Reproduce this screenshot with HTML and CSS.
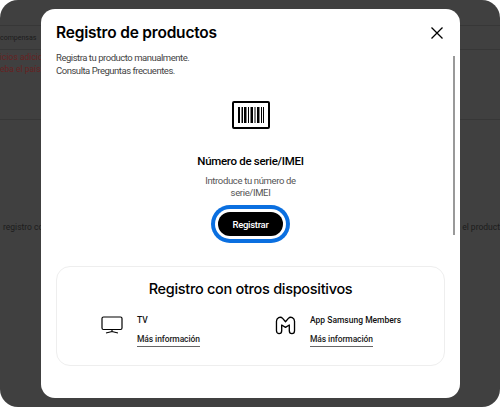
FILE: index.html
```html
<!DOCTYPE html>
<html lang="es">
<head>
    <meta charset="UTF-8">
    <meta name="viewport" content="width=device-width, initial-scale=1.0">
    <title>Registro de productos</title>
    <link rel="stylesheet" href="styles.css">
</head>
<body>

    <div class="screen">
        <!-- Page behind the dialog -->
        <div class="backdrop">
            <div class="back-row back-tabs"><span>compensas</span></div>
            <div class="back-row back-notes">
                <span>icios adicio</span>
                <span>eba el país</span>
            </div>
            <div class="back-row back-body">
                <span>registro co</span>
                <span>el product</span>
            </div>
        </div>

        <!-- Dialog -->
        <div class="modal">
            <div class="modal-head">
                <h2>Registro de productos</h2>
                <svg class="close-icon" viewBox="0 0 12 12" width="12" height="12">
                    <path d="M0.5 0.5L11.5 11.5M11.5 0.5L0.5 11.5" fill="none" stroke="#000" stroke-width="1.3"/>
                </svg>
            </div>
            <p class="intro">Registra tu producto manualmente.<br>Consulta Preguntas frecuentes.</p>

            <div class="serial">
                <svg class="barcode" viewBox="0 0 38 28" width="38" height="28">
                    <rect x="1" y="1" width="36" height="26" rx="1" fill="none" stroke="#000" stroke-width="2"/>
                    <path d="M6 6h2v16h-2zM9.500 6h1.500v16h-1.500zM12 6h2.500v16h-2.500zM16 6h1v16h-1zM18.500 6h2.500v16h-2.500zM22.500 6h1v16h-1zM25 6h2.500v16h-2.500zM29 6h1v16h-1zM31 6h1v16h-1z"/>
                </svg>
                <h3>Número de serie/IMEI</h3>
                <p>Introduce tu número de<br>serie/IMEI</p>
                <button class="register">Registrar</button>
            </div>

            <div class="other-card">
                <h2>Registro con otros dispositivos</h2>
                <div class="device-list">
                    <div class="device">
                        <svg viewBox="0 0 22 18" width="22" height="18">
                            <rect x="1" y="1" width="20" height="12.500" rx="1.500" fill="none" stroke="#000" stroke-width="1.200"/>
                            <path d="M11 13.500V15.500M5 17L11 15.500L17 17" fill="none" stroke="#000" stroke-width="1.200"/>
                        </svg>
                        <div class="device-text">
                            <span class="device-name">TV</span>
                            <a class="more-link">Más información</a>
                        </div>
                    </div>
                    <div class="device">
                        <svg viewBox="0 0 22 20" width="21" height="19">
                            <path d="M1.500 5.500C1.500 2 5.500 0 8 2.500L11 6L14 2.500C16.500 0 20.500 2 20.500 5.500V15.500C20.500 19.500 15 19.500 15 15.500V9.500L11 12L7 9.500V15.500C7 19.500 1.500 19.500 1.500 15.500Z" fill="none" stroke="#000" stroke-width="1.400" stroke-linejoin="round"/>
                        </svg>
                        <div class="device-text">
                            <span class="device-name">App Samsung Members</span>
                            <a class="more-link">Más información</a>
                        </div>
                    </div>
                </div>
            </div>

            <div class="scrollbar"></div>
        </div>
    </div>

</body>
</html>
```

FILE: styles.css
```css
* {
    box-sizing: border-box;
    margin: 0;
    padding: 0;
    font-family: "Roboto", "Liberation Sans", sans-serif;
}

body {
    width: 500px;
    height: 407px;
    overflow: hidden;
    background: #fff;
}

.screen {
    position: relative;
    width: 500px;
    height: 407px;
    background: #404040;
    border-radius: 18px;
    overflow: hidden;
}

/* Dimmed page */
.backdrop {
    display: flex;
    flex-direction: column;
    padding-top: 25px;
    color: #1c1c1c;
    white-space: nowrap;
}

.back-row {
    border-top: 1px solid #373737;
}

.back-tabs {
    height: 24px;
    padding-top: 5px;
    font-size: 7px;
    line-height: 14px;
}

.back-notes {
    display: flex;
    flex-direction: column;
    height: 70px;
    padding-top: 1px;
    color: #662222;
    font-size: 8.500px;
    line-height: 12px;
}

.back-body {
    display: flex;
    justify-content: space-between;
    padding: 100px 0 0 3px;
    font-size: 8.500px;
    line-height: 14px;
}

/* Dialog */
.modal {
    position: absolute;
    top: 9px;
    left: 41px;
    width: 419px;
    height: 389px;
    background: #fff;
    border-radius: 14px;
    padding: 14px 15px 0;
    overflow: hidden;
}

.modal-head {
    display: flex;
    justify-content: space-between;
    align-items: center;
    padding-right: 2px;
}

h2 {
    font-family: "Inter", sans-serif;
    font-size: 15.500px;
    font-weight: 600;
    letter-spacing: -0.2px;
    color: #000;
}

.intro {
    margin-top: 9px;
    font-size: 9.500px;
    line-height: 13px;
    letter-spacing: -0.47px;
    color: #444;
}

.serial {
    display: flex;
    flex-direction: column;
    align-items: center;
    margin-top: 24px;
    text-align: center;
}

.serial h3 {
    margin-top: 25px;
    font-size: 11.500px;
    font-weight: 500;
    letter-spacing: -0.3px;
    color: #000;
}

.serial p {
    margin-top: 7px;
    font-size: 9.500px;
    line-height: 12px;
    letter-spacing: -0.35px;
    color: #555;
}

.register {
    margin-top: 13px;
    width: 65px;
    height: 24px;
    border: none;
    border-radius: 12px;
    background: #000;
    color: #fff;
    font-size: 9.500px;
    font-weight: 500;
    letter-spacing: -0.3px;
    box-shadow: 0 0 0 3px #fff, 0 0 0 7px #0a6fe0;
}

.other-card {
    margin-top: 30px;
    height: 100px;
    border: 1px solid #eee;
    border-radius: 14px;
    padding-top: 13px;
}

.other-card h2 {
    text-align: center;
    font-size: 14.500px;
    font-weight: 500;
    letter-spacing: -0.3px;
}

.device-list {
    display: flex;
    margin-top: 17px;
    padding-left: 44px;
}

.device {
    display: flex;
    flex: none;
    gap: 14px;
    width: 174px;
    align-items: flex-start;
}

.device svg {
    margin-top: 2px;
    flex: none;
}

.device-text {
    display: flex;
    flex-direction: column;
    align-items: flex-start;
}

.device-name {
    font-size: 8.500px;
    font-weight: 500;
    line-height: 12px;
    color: #111;
}

.more-link {
    margin-top: 7px;
    padding-bottom: 1px;
    font-size: 8.500px;
    font-weight: 500;
    line-height: 12px;
    letter-spacing: -0.1px;
    color: #222;
    border-bottom: 1px solid #666;
}

.scrollbar {
    position: absolute;
    top: 47px;
    right: 5px;
    width: 2px;
    height: 179px;
    background: #999;
}
```
